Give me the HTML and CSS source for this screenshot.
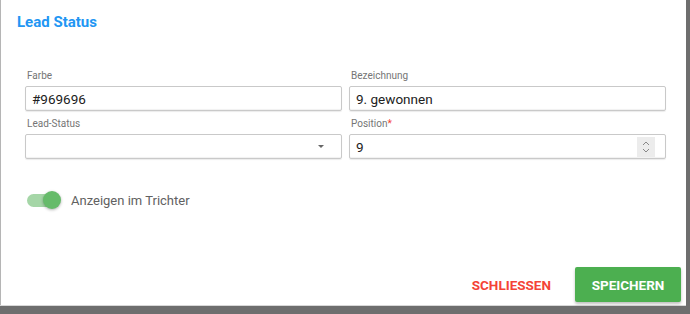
FILE: index.html
```html
<!DOCTYPE html>
<html lang="de">
<head>
    <meta charset="UTF-8">
    <meta name="viewport" content="width=device-width, initial-scale=1.0">
    <title>Lead Status</title>
    <link rel="stylesheet" href="styles.css">
</head>
<body>
    <div class="dialog">
        <h2 class="dialog-title">Lead Status</h2>

        <div class="form-grid">
            <div class="field">
                <label>Farbe</label>
                <div class="input-box">#969696</div>
            </div>
            <div class="field">
                <label>Bezeichnung</label>
                <div class="input-box">9. gewonnen</div>
            </div>
            <div class="field">
                <label>Lead-Status</label>
                <div class="input-box select-box">
                    <span></span>
                    <span class="caret"></span>
                </div>
            </div>
            <div class="field">
                <label>Position<span class="required">*</span></label>
                <div class="input-box number-box">
                    <span>9</span>
                    <span class="spinner">
                        <svg width="10" height="16" viewBox="0 0 10 16">
                            <path d="M2 6 L5 3 L8 6" fill="none" stroke="#888" stroke-width="1"/>
                            <path d="M2 10 L5 13 L8 10" fill="none" stroke="#888" stroke-width="1"/>
                        </svg>
                    </span>
                </div>
            </div>
        </div>

        <div class="toggle-row">
            <span class="toggle">
                <span class="toggle-track"></span>
                <span class="toggle-knob"></span>
            </span>
            <span class="toggle-label">Anzeigen im Trichter</span>
        </div>

        <div class="actions">
            <button class="btn btn-flat">SCHLIESSEN</button>
            <button class="btn btn-save">SPEICHERN</button>
        </div>
    </div>
</body>
</html>
```

FILE: styles.css
```css
html, body {
    margin: 0;
    height: 100%;
}
body {
    font-family: Roboto, 'Liberation Sans', sans-serif;
    background-color: #6e6e6e; /* Hintergrund hinter dem Dialog */
    overflow: hidden;
}
.dialog {
    background-color: #fff;
    width: 686px;
    height: 305px;
    border-left: 1px solid #b5b5b5;
    box-sizing: border-box;
    padding: 12px 0 0 0;
    display: flex;
    flex-direction: column;
    box-shadow: 0 1px 0 #d8d8d8;
}
.dialog-title {
    margin: 0 0 0 16px;
    font-size: 15px;
    font-weight: bold;
    color: #2196f3;
    line-height: 20px;
}
.form-grid {
    display: grid;
    grid-template-columns: 317px 317px;
    column-gap: 7px;
    row-gap: 7px;
    margin: 38px 0 0 24px;
}
.field label {
    display: block;
    font-size: 10px;
    color: #757575;
    line-height: 12px;
    margin: 0 0 4px 2px;
}
.required {
    color: #f44336;
}
.input-box {
    height: 25px;
    border: 1px solid #c9c9c9;
    border-radius: 2px;
    box-shadow: inset 0 -1px 1px rgba(0,0,0,0.06), 0 1px 1px rgba(0,0,0,0.08);
    box-sizing: border-box;
    padding: 0 6px;
    font-size: 13.5px;
    color: #212121;
    display: flex;
    align-items: center;
    justify-content: space-between;
}
.caret {
    width: 0;
    height: 0;
    border-left: 3px solid transparent;
    border-right: 3px solid transparent;
    border-top: 3px solid #666;
    margin-right: 11px;
}
.spinner {
    width: 18px;
    height: 20px;
    background-color: #ececec;
    display: flex;
    align-items: center;
    justify-content: center;
    margin-right: 4px;
}
.toggle-row {
    display: flex;
    align-items: center;
    margin: 31px 0 0 26px;
}
.toggle {
    position: relative;
    width: 34px;
    height: 20px;
    display: flex;
    align-items: center;
}
.toggle-track {
    width: 32px;
    height: 13px;
    border-radius: 7px;
    background-color: #a5d6a7;
}
.toggle-knob {
    position: absolute;
    right: 0;
    top: 1px;
    width: 18px;
    height: 18px;
    border-radius: 50%;
    background-color: #66bb6a;
    box-shadow: 0 1px 3px rgba(0,0,0,0.3);
}
.toggle-label {
    margin-left: 10px;
    font-size: 13px;
    color: #616161;
}
.actions {
    margin-top: auto;
    display: flex;
    justify-content: flex-end;
    align-items: center;
    gap: 12px;
    padding: 0 5px 3px 0;
}
.btn {
    font-family: Roboto, 'Liberation Sans', sans-serif;
    font-size: 13.5px;
    font-weight: bold;
    border: none;
    border-radius: 2px;
    height: 35px;
    cursor: pointer;
}
.btn-flat {
    background: none;
    color: #f44336;
    padding: 0 12px;
}
.btn-save {
    background-color: #4caf50;
    color: #fff;
    padding: 0 10px;
    width: 106px;
    box-shadow: 0 2px 3px rgba(0,0,0,0.25);
}
```
